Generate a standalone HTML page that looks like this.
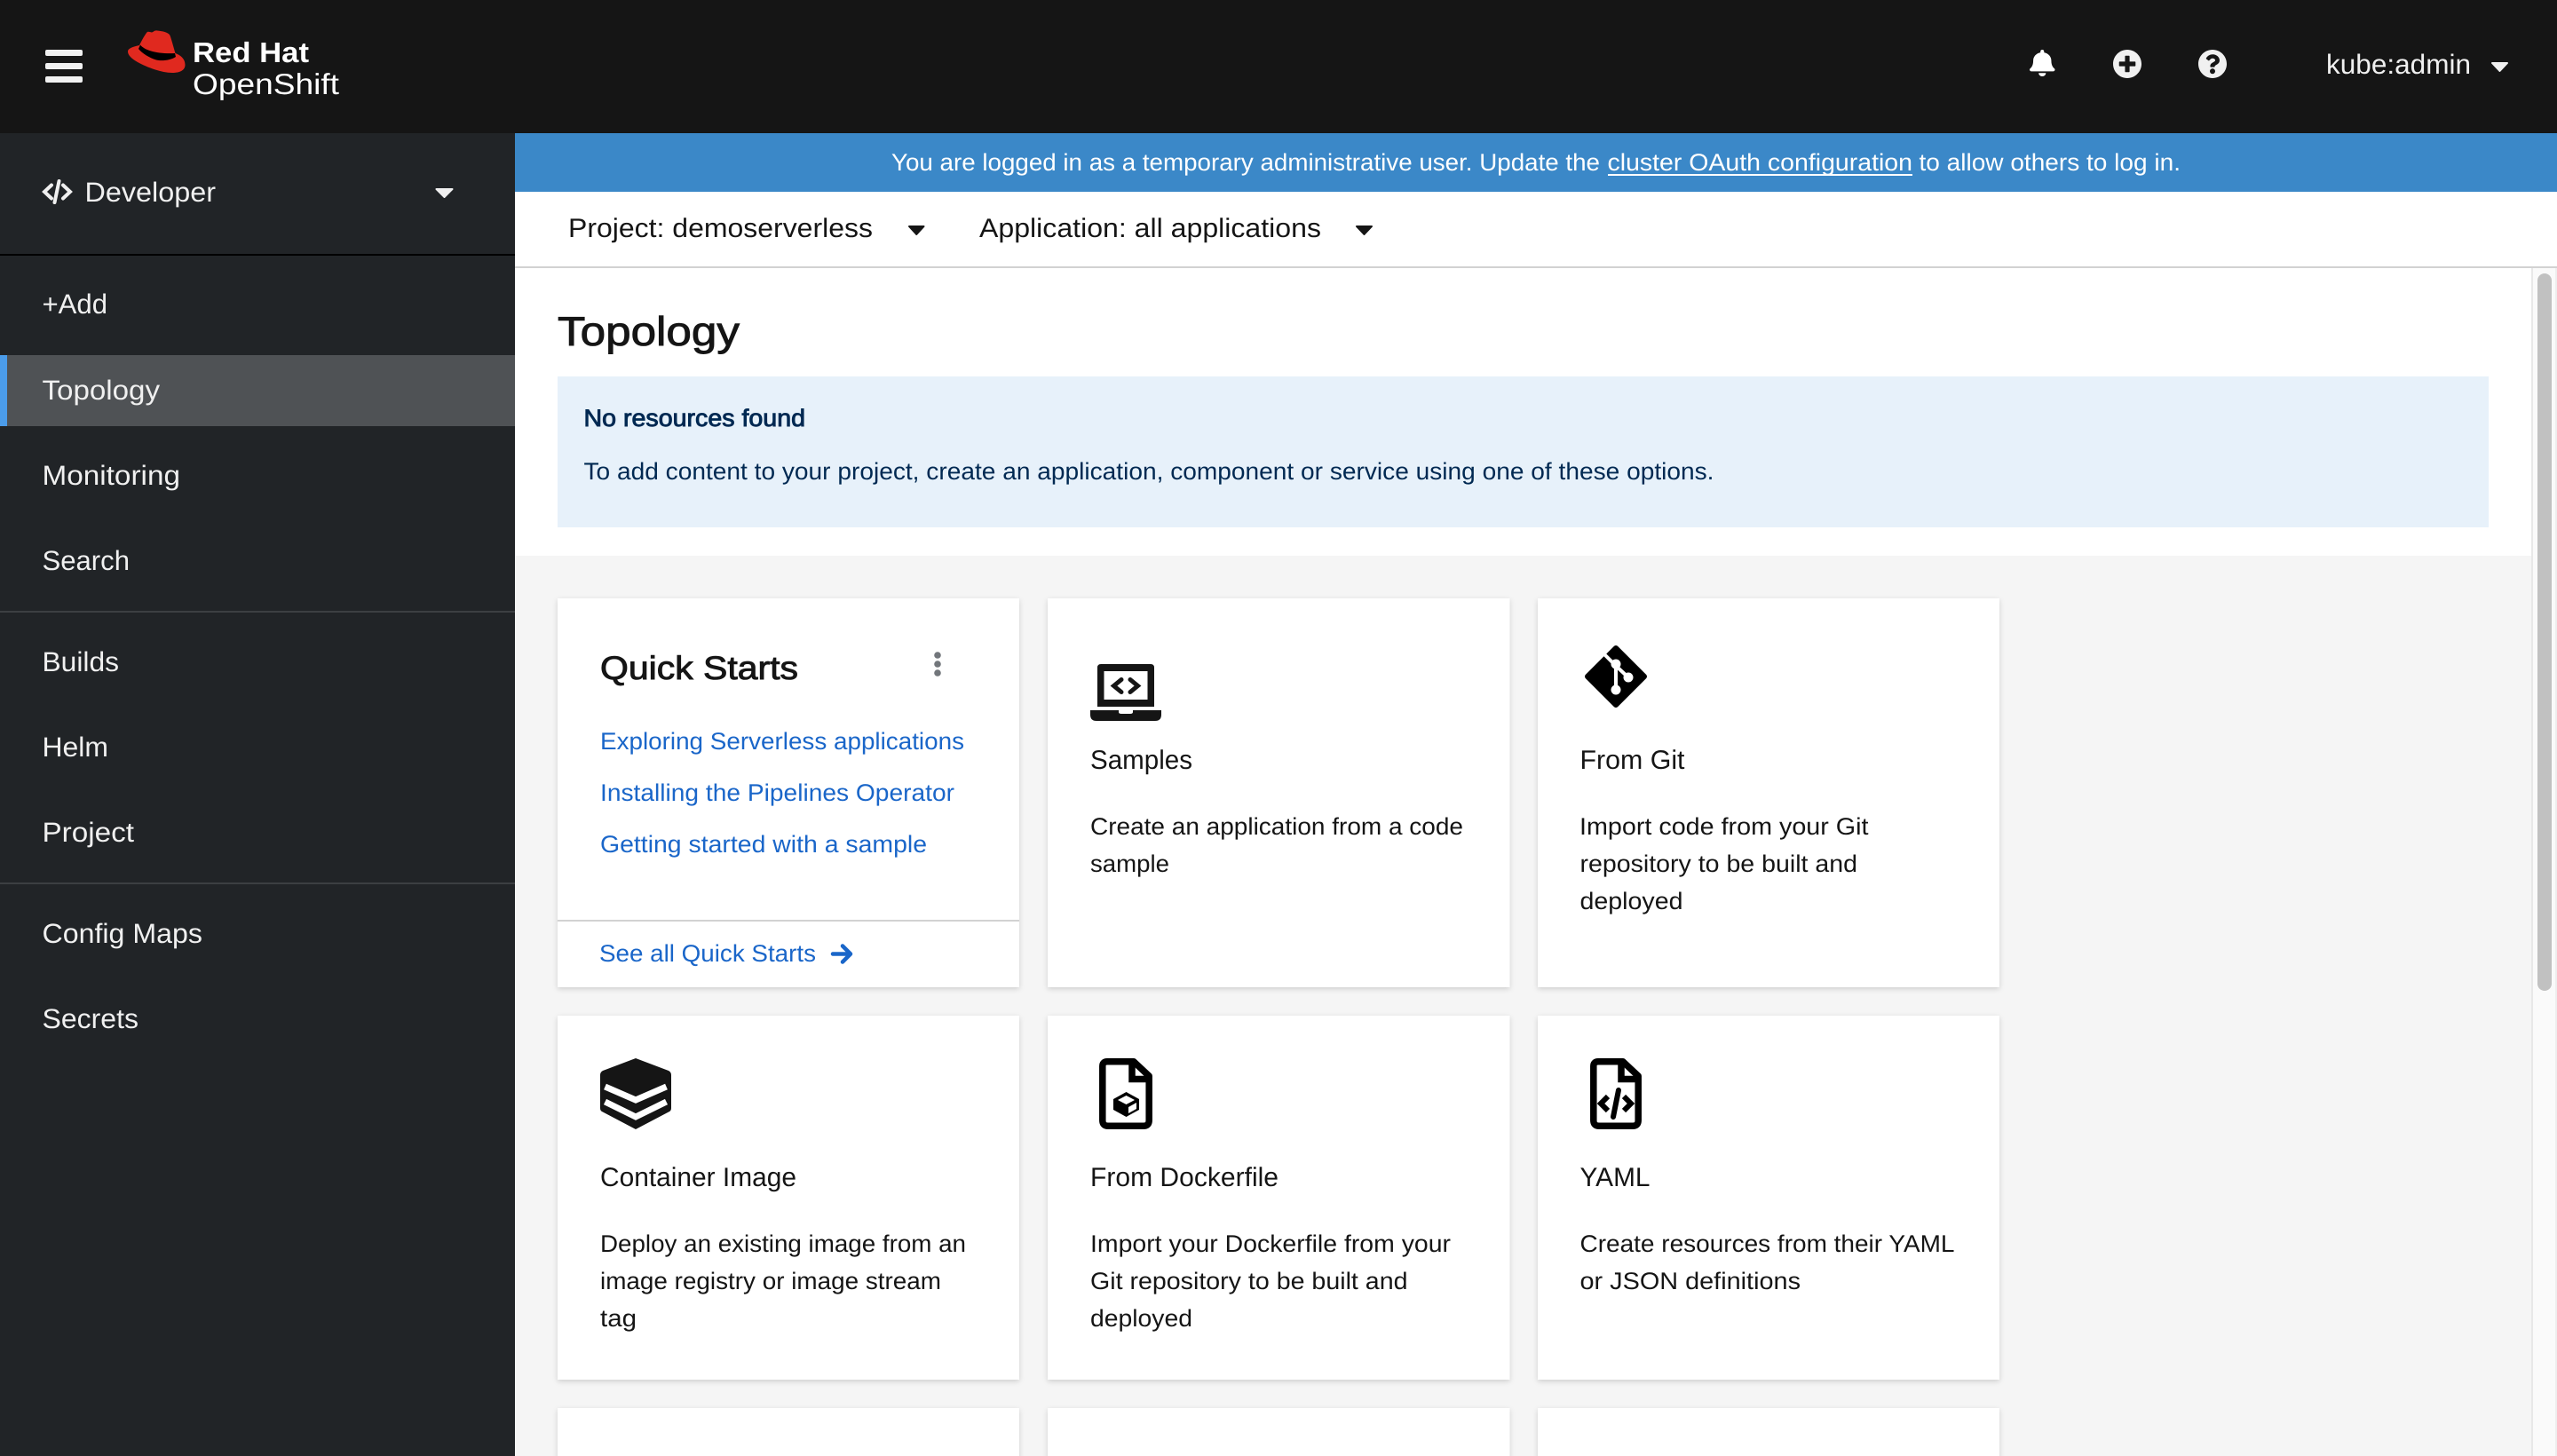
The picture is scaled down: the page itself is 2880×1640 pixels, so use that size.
<!DOCTYPE html>
<html lang="en">
<head>
<meta charset="utf-8">
<title>Topology · Red Hat OpenShift</title>
<style>
html,body{margin:0;padding:0;width:2880px;height:1640px;overflow:hidden;background:#fff}
svg{display:block;position:absolute;left:0;top:0}
text{font-family:"Liberation Sans",Arial,sans-serif;text-rendering:geometricPrecision;white-space:pre}
.nav{font-size:31px;fill:#f0f0f0}
.tool{font-size:30px;fill:#151515}
.ban{font-size:27px;fill:#fff}
.t{font-size:30px;fill:#151515}
.b{font-size:27px;fill:#151515}
.l{font-size:27px;fill:#1a66c9}
.al{font-size:27px;fill:#002952}
.med{stroke:currentColor;stroke-width:.9px}
</style>
</head>
<body>
<svg width="2880" height="1640" viewBox="0 0 2880 1640" xmlns="http://www.w3.org/2000/svg">
<defs>
<filter id="sh" x="-5%" y="-5%" width="110%" height="110%">
<feDropShadow dx="0" dy="2" stdDeviation="3" flood-color="#030303" flood-opacity=".16"/>
</filter>
</defs>

<!-- page backgrounds -->
<rect x="580" y="216" width="2300" height="1424" fill="#fff"/>
<rect x="580" y="626" width="2271" height="1014" fill="#f5f5f5"/>

<!-- masthead -->
<rect width="2880" height="150" fill="#151515"/>
<g fill="#f0f0f0">
<rect x="51" y="56" width="42" height="7" rx="2"/>
<rect x="51" y="71" width="42" height="7" rx="2"/>
<rect x="51" y="86" width="42" height="7" rx="2"/>
</g>
<path fill="#e0291f" d="M165 37C166.5 35 168 36 171 36.5C173 36 174 34 177 34.5C183 35 190 36.5 191.5 40C193 44 196 55 197.5 60C203 62 208.5 66 208.5 73C208.5 79 203 82 194 82C182 82 166 76 155 70C148 66 144 62 144 58C144 55 148 53 157 51C159 47 162 41 165 37Z"/>
<path fill="#000" d="M158 50.5C163 57 178 61 197 60L198 64C192 68 182 69 176 67.5C168 65 160 60 156 55Z"/>
<text x="217" y="70" font-size="32" font-weight="700" fill="#fff" textLength="131" lengthAdjust="spacingAndGlyphs">Red Hat</text>
<text x="217" y="106" font-size="33" fill="#fff" textLength="165" lengthAdjust="spacingAndGlyphs">OpenShift</text>

<g fill="#f0f0f0">
<path transform="translate(2286 56) scale(.0636 .0586)" fill="#fff" d="M224 512c35.32 0 63.97-28.65 63.97-64H160.03c0 35.35 28.65 64 63.97 64zm215.39-149.71c-19.32-20.76-55.47-51.99-55.47-154.29 0-77.7-54.48-139.9-127.94-155.16V32c0-17.67-14.32-32-31.98-32s-31.98 14.33-31.98 32v20.84C118.56 68.1 64.08 130.3 64.08 208c0 102.3-36.15 133.53-55.47 154.29-6 6.45-8.66 14.16-8.61 21.71.11 16.4 12.98 32 32.1 32h383.8c19.12 0 32-15.6 32.1-32 .05-7.55-2.61-15.27-8.61-21.71z"/>
<path transform="translate(2379.5 55.5) scale(.0645)" d="M256 8C119 8 8 119 8 256s111 248 248 248 248-111 248-248S393 8 256 8zm144 276c0 6.6-5.4 12-12 12h-92v92c0 6.6-5.4 12-12 12h-56c-6.6 0-12-5.4-12-12v-92h-92c-6.6 0-12-5.4-12-12v-56c0-6.6 5.4-12 12-12h92v-92c0-6.6 5.4-12 12-12h56c6.6 0 12 5.4 12 12v92h92c6.6 0 12 5.4 12 12v56z"/>
<path transform="translate(2475.5 55.5) scale(.0645)" d="M504 256c0 136.997-111.043 248-248 248S8 392.997 8 256C8 119.083 119.043 8 256 8s248 111.083 248 248zM262.655 90c-54.497 0-89.255 22.957-116.549 63.758-3.536 5.286-2.353 12.415 2.715 16.258l34.699 26.31c5.205 3.947 12.621 3.008 16.665-2.122 17.864-22.658 30.113-35.797 57.303-35.797 20.429 0 45.698 13.148 45.698 32.958 0 14.976-12.363 22.667-32.534 33.976C247.128 238.528 216 254.941 216 296v4c0 6.627 5.373 12 12 12h56c6.627 0 12-5.373 12-12v-1.333c0-28.462 83.186-29.647 83.186-106.667 0-58.002-60.165-102-116.531-102zM256 338c-25.365 0-46 20.635-46 46 0 25.364 20.635 46 46 46s46-20.636 46-46c0-25.365-20.635-46-46-46z"/>
</g>
<text x="2620" y="83" font-size="31" fill="#f0f0f0" textLength="163" lengthAdjust="spacingAndGlyphs">kube:admin</text>
<polygon points="2807,71 2824,71 2815.5,80" fill="#f0f0f0" stroke="#f0f0f0" stroke-width="2" stroke-linejoin="round"/>

<!-- sidebar -->
<rect x="0" y="150" width="580" height="1490" fill="#212427"/>
<path d="M58 208.5L50 216L58 223.5M71 208.5L79 216L71 223.5" fill="none" stroke="#f0f0f0" stroke-width="4" stroke-linecap="round"/>
<path d="M66.5 204L61.5 228" fill="none" stroke="#f0f0f0" stroke-width="4" stroke-linecap="round"/>
<text class="nav" x="95.5" y="227" textLength="147.5" lengthAdjust="spacingAndGlyphs">Developer</text>
<polygon points="491.5,213 509.5,213 500.5,222" fill="#f0f0f0" stroke="#f0f0f0" stroke-width="2" stroke-linejoin="round"/>
<rect x="0" y="286" width="580" height="2" fill="#000"/>

<rect x="0" y="400" width="580" height="80" fill="#4f5255"/>
<rect x="0" y="400" width="8" height="80" fill="#4b9cea"/>
<rect x="0" y="688" width="580" height="2" fill="#3c3f42"/>
<rect x="0" y="994" width="580" height="2" fill="#3c3f42"/>
<text class="nav" x="47.5" y="353" textLength="73.5" lengthAdjust="spacingAndGlyphs">+Add</text>
<text class="nav" x="47.5" y="450" fill="#fff" textLength="132.5" lengthAdjust="spacingAndGlyphs">Topology</text>
<text class="nav" x="47.5" y="546" textLength="155.5" lengthAdjust="spacingAndGlyphs">Monitoring</text>
<text class="nav" x="47.5" y="642" textLength="98.5" lengthAdjust="spacingAndGlyphs">Search</text>
<text class="nav" x="47.5" y="756" textLength="86.5" lengthAdjust="spacingAndGlyphs">Builds</text>
<text class="nav" x="47.5" y="852" textLength="74.5" lengthAdjust="spacingAndGlyphs">Helm</text>
<text class="nav" x="47.5" y="948" textLength="103.5" lengthAdjust="spacingAndGlyphs">Project</text>
<text class="nav" x="47.5" y="1062" textLength="180.5" lengthAdjust="spacingAndGlyphs">Config Maps</text>
<text class="nav" x="47.5" y="1158" textLength="108.5" lengthAdjust="spacingAndGlyphs">Secrets</text>

<!-- banner -->
<rect x="580" y="150" width="2300" height="66" fill="#3b88c8"/>
<text class="ban" x="1004" y="192" textLength="798" lengthAdjust="spacingAndGlyphs">You are logged in as a temporary administrative user. Update the</text>
<text class="ban" x="1810.5" y="192" textLength="343.5" lengthAdjust="spacingAndGlyphs">cluster OAuth configuration</text>
<rect x="1811" y="196" width="343" height="2" fill="#fff"/>
<text class="ban" x="2161.5" y="192" textLength="294.5" lengthAdjust="spacingAndGlyphs">to allow others to log in.</text>

<!-- toolbar -->
<rect x="580" y="300" width="2300" height="2" fill="#d2d2d2"/>
<text class="tool" x="640" y="267" textLength="343" lengthAdjust="spacingAndGlyphs">Project: demoserverless</text>
<polygon points="1024,255 1040.5,255 1032.25,264" fill="#151515" stroke="#151515" stroke-width="2" stroke-linejoin="round"/>
<text class="tool" x="1103" y="267" textLength="385" lengthAdjust="spacingAndGlyphs">Application: all applications</text>
<polygon points="1528,255 1545,255 1536.5,264" fill="#151515" stroke="#151515" stroke-width="2" stroke-linejoin="round"/>

<!-- title + alert -->
<text x="628" y="389" font-size="46" fill="#151515" class="med" style="color:#151515" textLength="205" lengthAdjust="spacingAndGlyphs">Topology</text>
<rect x="628" y="424" width="2175" height="170" fill="#e7f1fa"/>
<text class="al med" x="657.5" y="480" style="color:#002952" textLength="249.5" lengthAdjust="spacingAndGlyphs">No resources found</text>
<text class="al" x="657.5" y="540" textLength="1273" lengthAdjust="spacingAndGlyphs">To add content to your project, create an application, component or service using one of these options.</text>

<!-- cards -->
<g fill="#fff" filter="url(#sh)">
<rect x="628" y="674" width="520" height="438"/>
<rect x="1180" y="674" width="520.5" height="438"/>
<rect x="1732" y="674" width="520" height="438"/>
<rect x="628" y="1144" width="520" height="410"/>
<rect x="1180" y="1144" width="520.5" height="410"/>
<rect x="1732" y="1144" width="520" height="410"/>
<rect x="628" y="1586" width="520" height="80"/>
<rect x="1180" y="1586" width="520.5" height="80"/>
<rect x="1732" y="1586" width="520" height="80"/>
</g>

<!-- Quick Starts -->
<text x="676" y="765" font-size="37" fill="#151515" class="med" style="color:#151515" textLength="223" lengthAdjust="spacingAndGlyphs">Quick Starts</text>
<g fill="#72767b"><circle cx="1056" cy="738" r="3.8"/><circle cx="1056" cy="748" r="3.8"/><circle cx="1056" cy="758" r="3.8"/></g>
<text class="l" x="676" y="844" textLength="410" lengthAdjust="spacingAndGlyphs">Exploring Serverless applications</text>
<text class="l" x="676" y="902" textLength="399" lengthAdjust="spacingAndGlyphs">Installing the Pipelines Operator</text>
<text class="l" x="676" y="960" textLength="368" lengthAdjust="spacingAndGlyphs">Getting started with a sample</text>
<rect x="628" y="1036" width="520" height="2" fill="#d2d2d2"/>
<text class="l" x="675" y="1083" textLength="244" lengthAdjust="spacingAndGlyphs">See all Quick Starts</text>
<path d="M938 1074.5H957M949 1065.5L958 1074.5L949 1083.5" fill="none" stroke="#1a66c9" stroke-width="4.5" stroke-linecap="round" stroke-linejoin="round"/>

<!-- Samples -->
<path fill="#151515" fill-rule="evenodd" d="M1240 748H1296Q1300 748 1300 752V796H1236V752Q1236 748 1240 748ZM1243.5 756V788H1292.5V756Z"/>
<path fill="#151515" d="M1228 800H1260V802Q1260 804 1263 804H1273Q1276 804 1276 802V800H1308V805Q1308 812 1301 812H1235Q1228 812 1228 805Z"/>
<path d="M1263 765.5L1254.5 772.5L1263 779.5M1273 765.5L1281.5 772.5L1273 779.5" fill="none" stroke="#151515" stroke-width="5" stroke-linecap="round"/>
<text class="t" x="1228" y="866" textLength="115" lengthAdjust="spacingAndGlyphs">Samples</text>
<text class="b" x="1228" y="940" textLength="420" lengthAdjust="spacingAndGlyphs">Create an application from a code</text>
<text class="b" x="1228" y="982" textLength="89" lengthAdjust="spacingAndGlyphs">sample</text>

<!-- From Git -->
<polygon points="1820,730 1852,762 1820,794 1788,762" fill="#000" stroke="#000" stroke-width="6" stroke-linejoin="round"/>
<path d="M1806 736L1820 750V777M1820 750L1834 763" fill="none" stroke="#fff" stroke-width="4"/>
<g fill="#fff"><circle cx="1820" cy="748" r="5.5"/><circle cx="1820" cy="777" r="5.5"/><circle cx="1834" cy="763" r="5.5"/></g>
<text class="t" x="1779.5" y="866" textLength="118" lengthAdjust="spacingAndGlyphs">From Git</text>
<text class="b" x="1779" y="940" textLength="325.5" lengthAdjust="spacingAndGlyphs">Import code from your Git</text>
<text class="b" x="1779.5" y="982" textLength="312.5" lengthAdjust="spacingAndGlyphs">repository to be built and</text>
<text class="b" x="1779.5" y="1024" textLength="116" lengthAdjust="spacingAndGlyphs">deployed</text>

<!-- Container Image -->
<path fill="#151515" d="M716 1192L753 1206Q756 1207.5 756 1211V1248Q756 1251 754 1252L716 1272L678 1252Q676 1251 676 1248V1211Q676 1207.5 679 1206Z"/>
<path d="M681.5 1224L716 1239L750.5 1224M681.5 1241L716 1258L750.5 1241" fill="none" stroke="#fff" stroke-width="7"/>
<text class="t" x="676" y="1336" textLength="221" lengthAdjust="spacingAndGlyphs">Container Image</text>
<text class="b" x="676" y="1410" textLength="412" lengthAdjust="spacingAndGlyphs">Deploy an existing image from an</text>
<text class="b" x="676" y="1452" textLength="384" lengthAdjust="spacingAndGlyphs">image registry or image stream</text>
<text class="b" x="676" y="1494" textLength="41" lengthAdjust="spacingAndGlyphs">tag</text>

<!-- From Dockerfile -->
<path d="M1247 1195.8H1277L1294.2 1212V1262Q1294.2 1268.2 1288 1268.2H1248Q1241.8 1268.2 1241.8 1262V1201Q1241.8 1195.8 1247 1195.8Z" fill="none" stroke="#000" stroke-width="7.5" stroke-linejoin="round"/>
<path d="M1275 1196V1215.5H1295" fill="none" stroke="#000" stroke-width="7.5"/>
<polygon points="1268.5,1230 1283,1238 1283,1250 1268.5,1258 1254,1250 1254,1238" fill="#000"/>
<polygon points="1268.5,1234 1278,1239 1268.5,1244 1259,1239" fill="#fff"/>
<polygon points="1271,1247 1280,1242 1280,1249 1271,1254" fill="#fff"/>
<text class="t" x="1228" y="1336" textLength="212" lengthAdjust="spacingAndGlyphs">From Dockerfile</text>
<text class="b" x="1228" y="1410" textLength="406" lengthAdjust="spacingAndGlyphs">Import your Dockerfile from your</text>
<text class="b" x="1228" y="1452" textLength="357.5" lengthAdjust="spacingAndGlyphs">Git repository to be built and</text>
<text class="b" x="1228" y="1494" textLength="115" lengthAdjust="spacingAndGlyphs">deployed</text>

<!-- YAML -->
<path d="M1800 1195.8H1828L1845.2 1212V1262Q1845.2 1268.2 1839 1268.2H1801Q1794.8 1268.2 1794.8 1262V1201Q1794.8 1195.8 1800 1195.8Z" fill="none" stroke="#000" stroke-width="7.5" stroke-linejoin="round"/>
<path d="M1826 1196V1215.5H1846" fill="none" stroke="#000" stroke-width="7.5"/>
<path d="M1811 1235L1803 1243L1811 1251M1829 1235L1837 1243L1829 1251" fill="none" stroke="#000" stroke-width="6"/>
<path d="M1823 1228L1817 1258" fill="none" stroke="#000" stroke-width="6" stroke-linecap="round"/>
<text class="t" x="1779.5" y="1336" textLength="79" lengthAdjust="spacingAndGlyphs">YAML</text>
<text class="b" x="1779.5" y="1410" textLength="422" lengthAdjust="spacingAndGlyphs">Create resources from their YAML</text>
<text class="b" x="1779.5" y="1452" textLength="248.5" lengthAdjust="spacingAndGlyphs">or JSON definitions</text>

<!-- scrollbar -->
<rect x="2851" y="302" width="29" height="1338" fill="#fafafa"/>
<rect x="2851" y="302" width="2" height="1338" fill="#e8e8e8"/>
<rect x="2878" y="302" width="2" height="1338" fill="#eeeeee"/>
<rect x="2858" y="308" width="16" height="808" rx="8" fill="#c1c1c1"/>
</svg>
</body>
</html>
